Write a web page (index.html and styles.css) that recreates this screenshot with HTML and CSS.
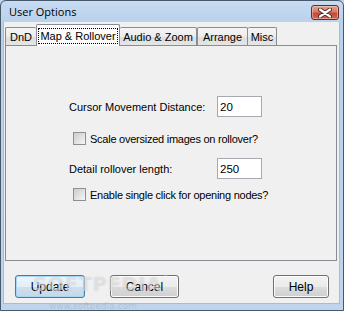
FILE: index.html
```html
<!DOCTYPE html>
<html>
<head>
<meta charset="utf-8">
<title>User Options</title>
<link rel="stylesheet" href="styles.css">
</head>
<body>
<div class="window">
  <div class="titlebar">
    <span class="title">User Options</span>
    <div class="close">
      <svg width="14" height="10" viewBox="0 0 14 10">
        <path d="M2 1.5 L12 8.5 M12 1.5 L2 8.5" stroke="#4a2620" stroke-width="4" stroke-linecap="round"/>
        <path d="M2 1.5 L12 8.5 M12 1.5 L2 8.5" stroke="#ffffff" stroke-width="2.2" stroke-linecap="round"/>
      </svg>
    </div>
  </div>
  <div class="client">
    <div class="tabs">
      <div class="tab tab-dnd">DnD</div>
      <div class="tab tab-map active"><span class="focus">Map &amp; Rollover</span></div>
      <div class="tab tab-audio">Audio &amp; Zoom</div>
      <div class="tab tab-arrange">Arrange</div>
      <div class="tab tab-misc">Misc</div>
    </div>
    <div class="panel">
      <div class="field row-1">
        <span class="label">Cursor Movement Distance:</span>
        <span class="input">20</span>
      </div>
      <div class="check check-1">
        <span class="box"></span>
        <span class="label">Scale oversized images on rollover?</span>
      </div>
      <div class="field row-2">
        <span class="label">Detail rollover length:</span>
        <span class="input">250</span>
      </div>
      <div class="check check-2">
        <span class="box"></span>
        <span class="label">Enable single click for opening nodes?</span>
      </div>
    </div>
    <div class="buttons">
      <button class="btn btn-default btn-update">Update</button>
      <button class="btn btn-cancel">Cancel</button>
      <button class="btn btn-help">Help</button>
    </div>
  </div>
  <div class="watermark">
    <span class="wm-big">SOFTPEDIA<sup>™</sup></span>
    <span class="wm-small">www.softpedia.com</span>
  </div>
</div>
</body>
</html>
```

FILE: styles.css
```css
* { box-sizing: border-box; }
html, body { margin: 0; padding: 0; background: #bdd3ec; }
body { width: 344px; height: 311px; overflow: hidden; }

.window {
  position: relative;
  width: 344px;
  height: 311px;
  border: 1px solid #48586b;
  border-radius: 6px 6px 0 0;
  background: linear-gradient(#c7dbf2 0px, #bad1ec 22px, #bfd5ee 100%);
  padding: 0 3px 6px 2px;
  display: flex;
  flex-direction: column;
}

.titlebar {
  height: 21px;
  display: flex;
  align-items: center;
  padding-left: 6px;
}
.title {
  font-family: "Open Sans", "Noto Sans", sans-serif;
  font-size: 11px;
  color: #000;
}
.close {
  margin-left: auto;
  margin-right: 1px;
  margin-top: 2px;
  width: 28px;
  height: 15px;
  border: 1px solid #6b2b23;
  border-radius: 3px;
  background: linear-gradient(#e3a492 0%, #d47b66 45%, #c24a36 55%, #cf6a55 100%);
  display: flex;
  align-items: center;
  justify-content: center;
  box-shadow: inset 0 0 0 1px rgba(255,220,210,0.45);
}
.close svg { display: block; }

.client {
  flex: 1;
  background: #f0f0f0;
  border: 1px solid #a9bcd2;
  border-top: none;
  display: flex;
  flex-direction: column;
  font-family: "Liberation Sans", Arial, sans-serif;
  font-size: 11px;
  color: #000;
}

.tabs {
  display: flex;
  align-items: flex-end;
  height: 23px;
  padding-left: 1px;
  position: relative;
  z-index: 2;
}
.tab {
  height: 18px;
  border: 1px solid #898c95;
  border-bottom: none;
  border-radius: 2px 2px 0 0;
  background: linear-gradient(#f5f5f5 0%, #ececec 50%, #dedede 51%, #e5e5e5 100%);
  display: flex;
  align-items: center;
  justify-content: center;
  font-size: 11px;
  white-space: nowrap;
  padding-top: 1px;
}
.tab-dnd { width: 31px; border-right: none; }
.tab-map { width: 84px; }
.tab-audio { width: 77px; border-left: none; }
.tab-arrange { width: 51px; }
.tab-misc { width: 29px; border-left: none; }
.tab.active {
  height: 22px;
  margin-bottom: -1px;
  background: #fbfbfb;
  padding-top: 0;
  align-items: flex-start;
}
.focus {
  margin-top: 3px;
  padding: 1px 2px;
  outline: 1px dotted #000;
  outline-offset: -1px;
  line-height: 14px;
  white-space: nowrap;
}

.panel {
  height: 216px;
  margin: 0 2px 0 1px;
  border: 1px solid #898c95;
  background: #f0f0f0;
  padding: 50px 0 0 63px;
  display: flex;
  flex-direction: column;
  position: relative;
  z-index: 1;
}
.field {
  display: flex;
  align-items: center;
  height: 21px;
}
.field .label { width: 148px; }
.input {
  width: 45px;
  height: 21px;
  border: 1px solid #a5a9b0;
  background: #fff;
  padding-left: 2px;
  display: flex;
  align-items: center;
  font-size: 11.5px;
}
.check {
  display: flex;
  align-items: center;
  height: 13px;
  padding-left: 4px;
}
.box {
  width: 13px;
  height: 13px;
  border: 1px solid #8e8f8f;
  background: linear-gradient(135deg, #cbcbcb, #f6f6f6);
  margin-right: 4px;
}
.check .label { font-size: 11px; letter-spacing: -0.25px; }
.check-1 { margin-top: 15px; }
.row-2 { margin-top: 13px; }
.check-2 { margin-top: 9px; }

.buttons {
  display: flex;
  padding: 14px 10px 0 11px;
}
.btn {
  height: 23px;
  border: 1px solid #707070;
  border-radius: 3px;
  background: linear-gradient(#f2f2f2 0%, #ebebeb 50%, #dddddd 51%, #cfcfcf 100%);
  box-shadow: inset 0 0 0 1px #fcfcfc;
  font-family: "Liberation Sans", Arial, sans-serif;
  font-size: 12px;
  color: #000;
  padding: 0;
  margin: 0;
}
.btn-update { width: 70px; }
.btn-cancel { width: 69px; margin-left: 25px; }
.btn-help { width: 56px; margin-left: auto; }
.btn-default {
  border-color: #3c7fb1;
  background: linear-gradient(#eef5fb 0%, #e3eef7 50%, #cfe0ee 51%, #c4d8e8 100%);
  box-shadow: inset 0 0 0 1px #a8d6f3;
}

.watermark {
  position: absolute;
  left: 32px;
  top: 272px;
  width: 140px;
  height: 38px;
  pointer-events: none;
  font-family: "DejaVu Sans", sans-serif;
  color: rgba(255,255,255,0.45);
}
.wm-big {
  position: absolute;
  left: 0;
  top: 0;
  font-size: 19px;
  font-weight: bold;
  letter-spacing: 1px;
  text-shadow: 0 0 1px rgba(120,120,120,0.35);
}
.wm-big sup { font-size: 6px; vertical-align: top; }
.wm-small {
  position: absolute;
  left: 16px;
  top: 28px;
  font-size: 9px;
  line-height: 10px;
  color: rgba(150,150,150,0.35);
}
```
